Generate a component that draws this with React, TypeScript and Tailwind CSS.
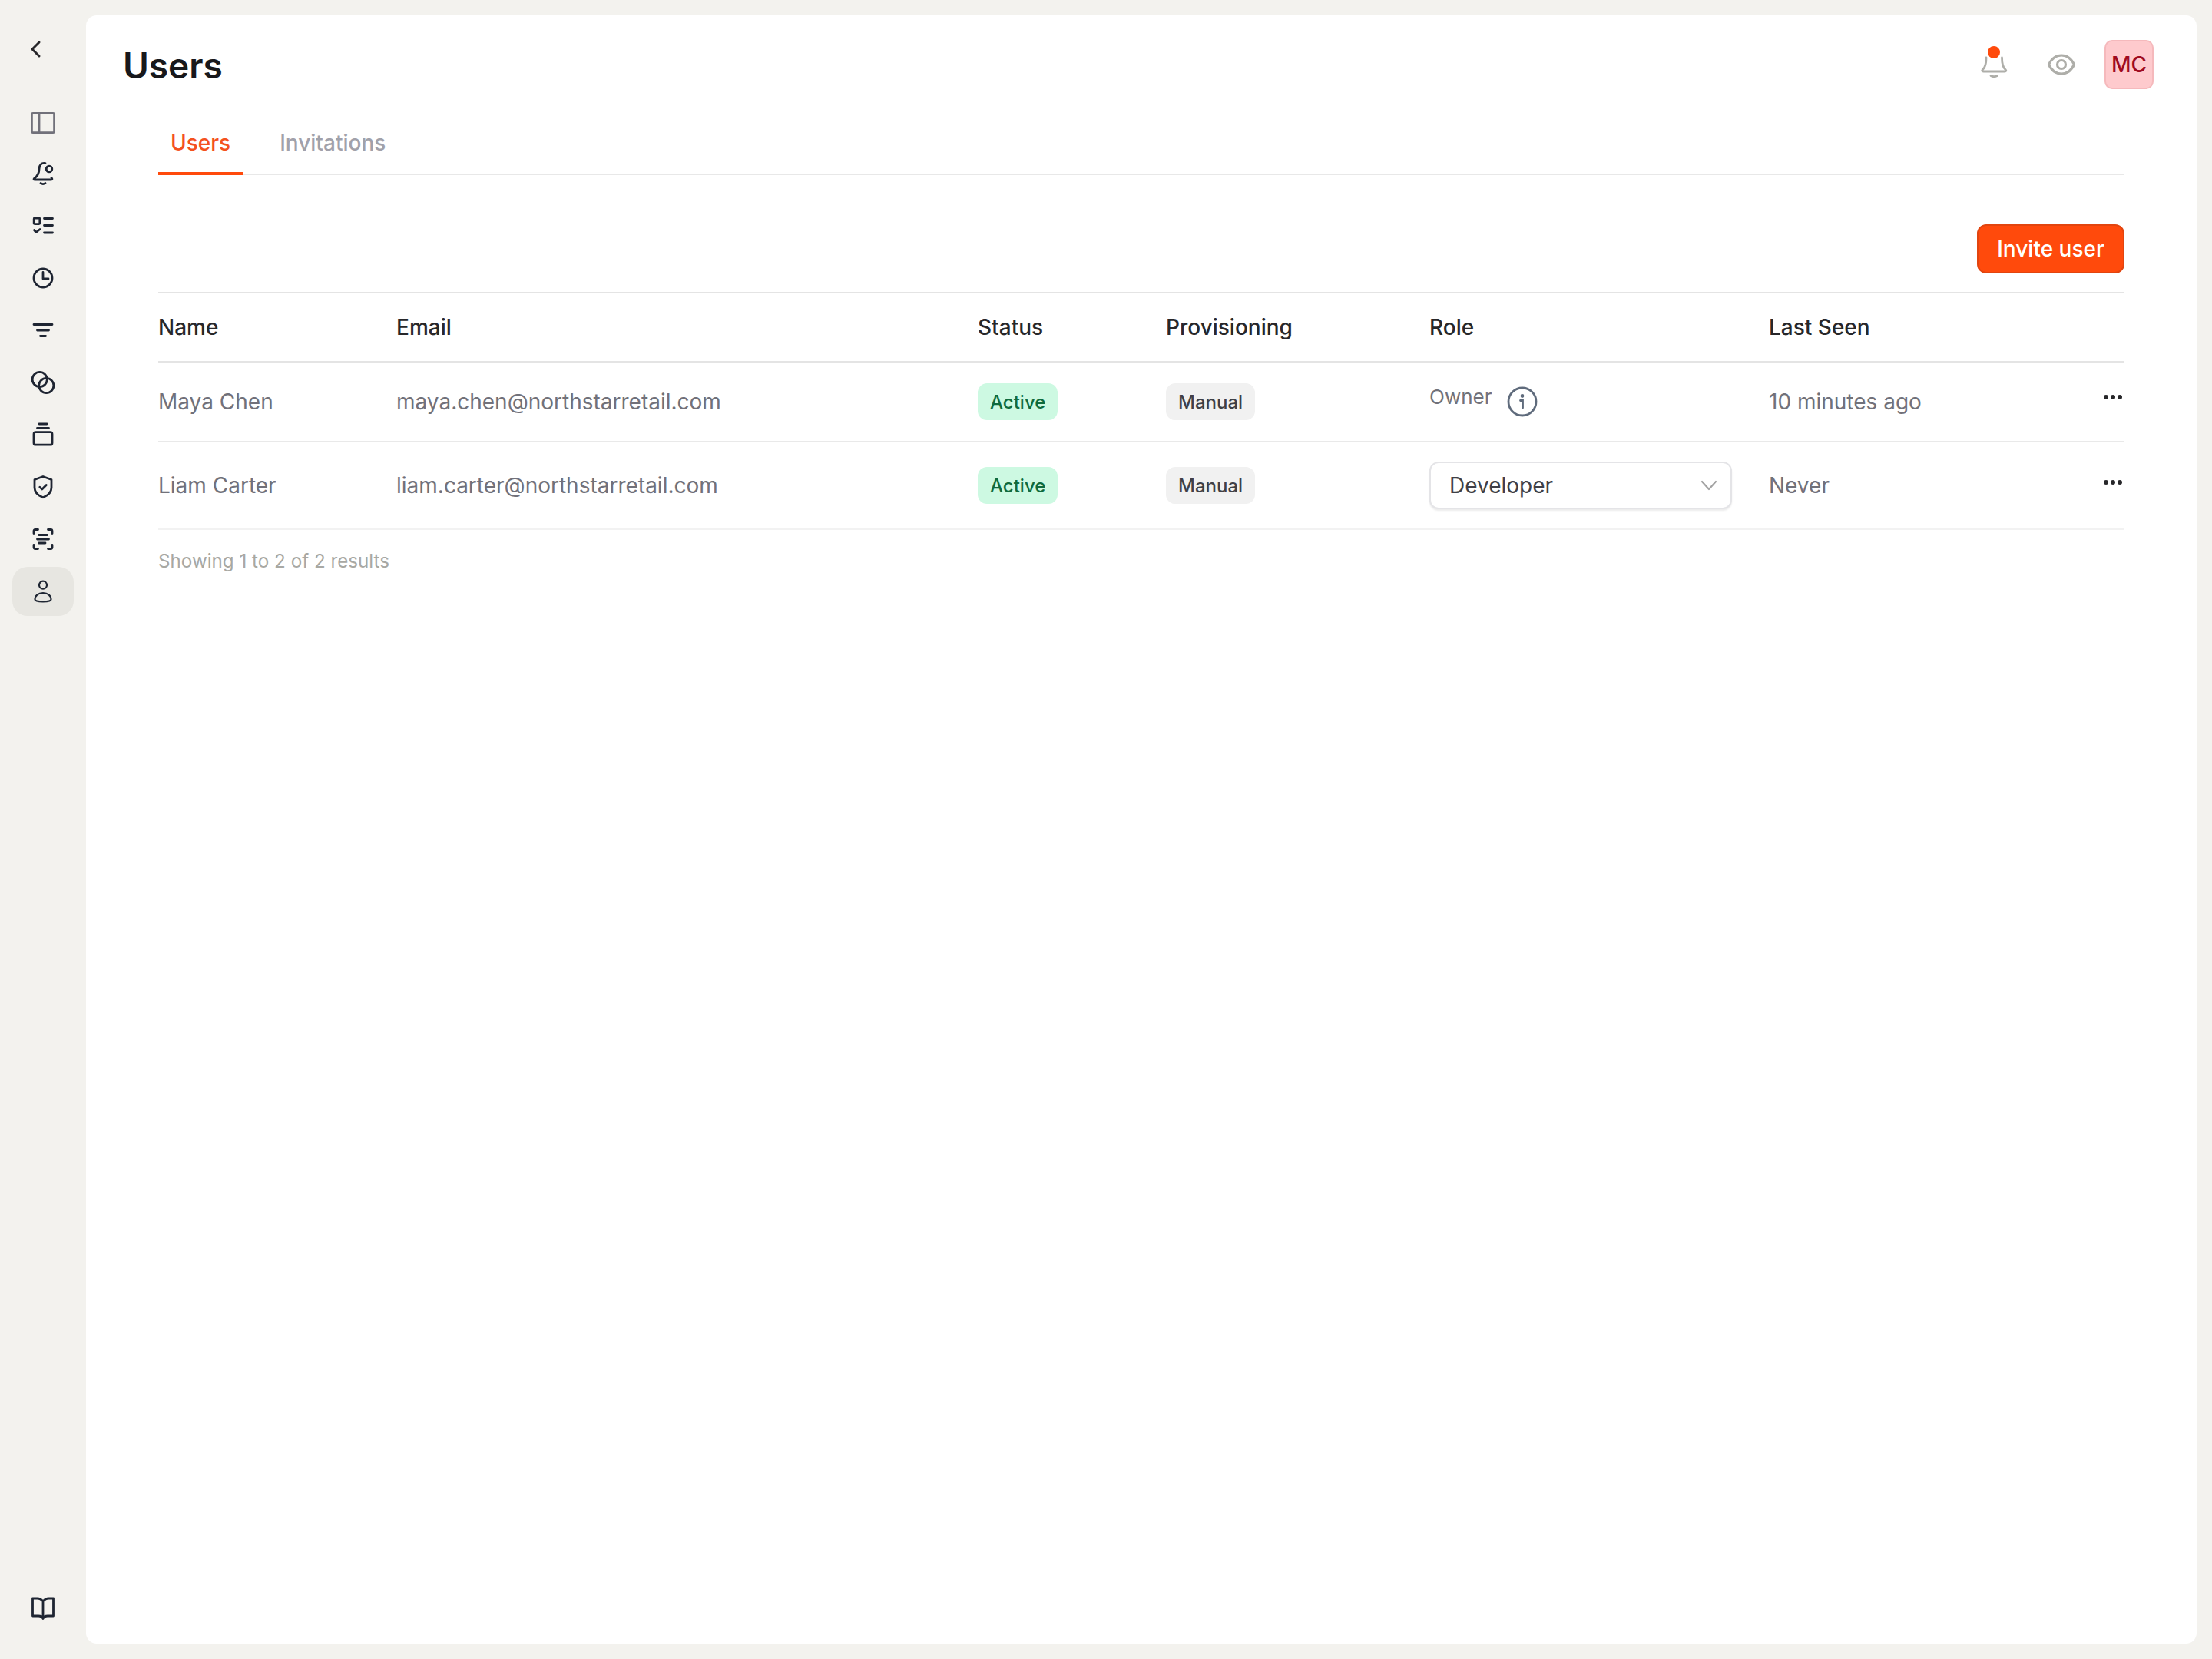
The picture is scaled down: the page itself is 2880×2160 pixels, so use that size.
import type { ReactNode } from "react"

const gridCols = "grid grid-cols-[310px_757px_245px_343px_442px_1fr]"

function NavIcon({ children, gray }: { children: ReactNode; gray?: boolean }) {
  return (
    <svg
      viewBox="0 0 40 40"
      fill="none"
      stroke={gray ? "#71717a" : "#1e2532"}
      strokeWidth={2.8}
      strokeLinecap="round"
      strokeLinejoin="round"
      className="h-[40px] w-[40px]"
    >
      {children}
    </svg>
  )
}

const navItems: { key: string; gray?: boolean; active?: boolean; icon: ReactNode }[] = [
  {
    key: "panel",
    gray: true,
    icon: (
      <>
        <rect x="5.4" y="9.4" width="29.2" height="25.2" rx="1.5" />
        <path d="M15 9.4V34.6" />
      </>
    ),
  },
  {
    key: "alerts",
    icon: (
      <>
        <path d="M23 6.5C18 5.5 15 9 15 14C15 20 12 24 8.5 26.5C7.5 27.5 8 28 9.5 28H30.5C32 28 32.5 27 31 25.5" />
        <circle cx="28" cy="14" r="3.8" />
        <path d="M17 32.5Q20 34.8 23 32.5" />
      </>
    ),
  },
  {
    key: "tasks",
    icon: (
      <>
        <rect x="8.2" y="10" width="7.6" height="7.6" rx="1" />
        <path d="M8.5 25.5L11 28.5L16 24.5" />
        <path d="M21.5 10.5H32.5M21.5 19.5H32.5M21.5 29H32.5" />
      </>
    ),
  },
  {
    key: "history",
    icon: (
      <>
        <circle cx="20" cy="20" r="12" />
        <path d="M20 12.5V21H27" />
      </>
    ),
  },
  {
    key: "filters",
    icon: <path d="M8 12.5H32M12.5 20H27.5M16.5 27.5H23.5" />,
  },
  {
    key: "circles",
    icon: (
      <>
        <circle cx="15.7" cy="16" r="9.6" />
        <circle cx="24.3" cy="24" r="9.6" />
      </>
    ),
  },
  {
    key: "stack",
    icon: (
      <>
        <rect x="8" y="16.7" width="24" height="16.5" rx="2.5" />
        <path d="M15 6H25M12.5 11.3H27.5" />
      </>
    ),
  },
  {
    key: "shield",
    icon: (
      <>
        <path d="M20 6.5L31 10.5V21C31 27.5 25.5 31.5 20 33.8C14.5 31.5 9 27.5 9 21V10.5Z" />
        <path d="M15.8 20.2L18.8 23L24.3 17.4" />
      </>
    ),
  },
  {
    key: "scan",
    icon: (
      <>
        <path d="M8 12.5V9.5Q8 7.5 10 7.5H13.5M26.5 7.5H30Q32 7.5 32 9.5V12.5M32 27.5V30.5Q32 32.5 30 32.5H26.5M13.5 32.5H10Q8 32.5 8 30.5V27.5" />
        <path d="M14.5 14.5H25.5M12.5 20H27.5M14.5 25H23" />
      </>
    ),
  },
  {
    key: "users",
    active: true,
    icon: (
      <g strokeWidth={2.2}>
        <circle cx="20" cy="11.7" r="5" />
        <path d="M9.5 30.5C9.5 25.5 14 22 20 22C26 22 30.5 25.5 30.5 30.5C30.5 32 27 33.3 20 33.3C13 33.3 9.5 32 9.5 30.5Z" />
      </g>
    ),
  },
]

const users = [
  { name: "Maya Chen", email: "maya.chen@northstarretail.com", seen: "10 minutes ago", owner: true, h: "h-[104px]" },
  { name: "Liam Carter", email: "liam.carter@northstarretail.com", seen: "Never", owner: false, h: "h-[114px]" },
]

function Dots({ offset }: { offset: string }) {
  return (
    <div className={`flex justify-end gap-[3px] pr-[3px] ${offset}`}>
      <span className="h-[6px] w-[6px] rounded-full bg-[#27272a]" />
      <span className="h-[6px] w-[6px] rounded-full bg-[#27272a]" />
      <span className="h-[6px] w-[6px] rounded-full bg-[#27272a]" />
    </div>
  )
}

export default function App() {
  return (
    <div className="flex h-[2160px] w-[2880px] bg-[#f3f2ee] py-[20px] pr-[20px] font-['Inter',sans-serif]">
      <aside className="flex w-[112px] shrink-0 flex-col justify-between">
        <div>
          <div className="flex h-[106px] items-start pl-[27px] pt-[24px]">
            <svg viewBox="0 0 40 40" fill="none" stroke="#27272a" strokeWidth={3} strokeLinecap="round" strokeLinejoin="round" className="h-[40px] w-[40px]">
              <path d="M24 11L15 20L24 29" />
            </svg>
          </div>
          <nav className="flex flex-col items-center gap-[4px]">
            {navItems.map((item) => (
              <div
                key={item.key}
                className={`flex h-[64px] w-[80px] items-center justify-center rounded-[20px] ${item.active ? "bg-[#e7e6e1]" : ""}`}
              >
                <NavIcon gray={item.gray}>{item.icon}</NavIcon>
              </div>
            ))}
          </nav>
        </div>
        <div className="flex justify-center pb-[26px]">
          <NavIcon>
            <path d="M20 11C18 8.5 15.5 7 12.5 7H6.5V30H14C17 30 19 31 20 33.5C21 31 23 30 26 30H33.5V7H27.5C24.5 7 22 8.5 20 11V33.5" />
          </NavIcon>
        </div>
      </aside>

      <main className="flex flex-1 flex-col rounded-[14px] bg-white">
        <header className="mt-[32px] flex h-[64px] items-center justify-between pl-[48px] pr-[56px]">
          <h1 className="pt-[1px] text-[46px] font-semibold leading-none text-[#18181b]">Users</h1>
          <div className="flex items-center">
            <div className="relative h-[40px] w-[40px]">
              <svg viewBox="0 0 40 40" fill="none" stroke="#aeaea9" strokeWidth={2.8} strokeLinecap="round" strokeLinejoin="round" className="h-[40px] w-[40px]">
                <path d="M10 11C10 20 8.5 24 5.5 26.5C4 28 4.5 29 6.5 29H34C36 29 36.5 28 35 26.5C32 24 30.5 20 30.5 11" />
                <path d="M16 34.5Q20 37 24.5 34.5" />
              </svg>
              <span className="absolute left-[12px] top-[-4px] h-[16px] w-[16px] rounded-full bg-[#ff4a0c]" />
            </div>
            <svg viewBox="0 0 40 40" fill="none" stroke="#aeaea9" strokeWidth={3.2} strokeLinecap="round" strokeLinejoin="round" className="ml-[48px] h-[40px] w-[40px]">
              <path d="M3.5 20C7 12.5 13 8 20 8C27 8 33 12.5 36.5 20C33 27.5 27 32 20 32C13 32 7 27.5 3.5 20Z" />
              <circle cx="20" cy="20" r="5.5" />
            </svg>
            <div className="ml-[36px] flex h-[64px] w-[64px] items-center justify-center rounded-[10px] border-2 border-[#f5b9bc] bg-[#fecacd] text-[28px] font-medium text-[#9f0a1f]">
              MC
            </div>
          </div>
        </header>

        <div className="mx-[94px] mt-[32px] flex flex-col">
          <div className="flex h-[80px] gap-[32px] border-b-2 border-[#e8e8e8]">
            <div className="-mb-[2px] flex h-[80px] items-center border-b-4 border-[#ff4a0c] px-[16px] text-[28px] font-medium text-[#f4511e]">
              Users
            </div>
            <div className="flex h-[76px] items-center px-[16px] text-[28px] font-medium text-[#a1a1aa]">
              Invitations
            </div>
          </div>

          <div className="mb-[24px] mt-[64px] flex justify-end">
            <button className="h-[64px] w-[192px] rounded-[12px] border-2 border-[#e2450f] bg-[#ff4a0c] text-[28px] font-medium text-white">
              Invite user
            </button>
          </div>

          <div className={`${gridCols} h-[92px] items-center border-b-2 border-t-2 border-[#e4e4e4] text-[28px] font-medium text-[#27272a]`}>
            <div>Name</div>
            <div>Email</div>
            <div>Status</div>
            <div>Provisioning</div>
            <div>Role</div>
            <div>Last Seen</div>
          </div>

          {users.map((user) => (
            <div
              key={user.email}
              className={`${gridCols} ${user.h} items-center border-b-2 ${user.owner ? "border-[#e9e9e9]" : "border-[#f2f2f2]"} text-[28px] text-[#71717a]`}
            >
              <div>{user.name}</div>
              <div>{user.email}</div>
              <div>
                <span className="inline-flex h-[48px] items-center rounded-[12px] bg-[#cdf9e2] px-[16px] pt-[1px] text-[24px] font-medium text-[#0f6b3d]">
                  Active
                </span>
              </div>
              <div>
                <span className="inline-flex h-[48px] items-center rounded-[12px] bg-[#f1f1f1] px-[16px] pt-[1px] text-[24px] font-medium text-[#3f3f46]">
                  Manual
                </span>
              </div>
              <div className="pr-[48px]">
                {user.owner ? (
                  <div className="flex items-center gap-[20px]">
                    <span className="-mt-[14px] text-[26px]">Owner</span>
                    <svg viewBox="0 0 40 40" fill="none" stroke="#5f6b7c" strokeWidth={2.8} strokeLinecap="round" className="h-[40px] w-[40px]">
                      <circle cx="20" cy="20" r="18" />
                      <path d="M17.5 18.5H20.5V28" />
                      <circle cx="20" cy="12.5" r="1" fill="#5f6b7c" />
                    </svg>
                  </div>
                ) : (
                  <div className="flex h-[62px] items-center justify-between rounded-[12px] border-2 border-[#e4e4e7] bg-white pl-[24px] pr-[16px] text-[#3f3f46] shadow-[0_2px_2px_rgba(0,0,0,0.08)]">
                    <span>Developer</span>
                    <svg viewBox="0 0 24 16" fill="none" stroke="#a3a3a3" strokeWidth={2.2} strokeLinecap="round" strokeLinejoin="round" className="h-[16px] w-[24px]">
                      <path d="M3 3L12 13L21 3" />
                    </svg>
                  </div>
                )}
              </div>
              <div className="flex items-center justify-between">
                <span>{user.seen}</span>
                <Dots offset={user.owner ? "-mt-[12px]" : "-mt-[8px]"} />
              </div>
            </div>
          ))}

          <div className="mt-[25px] text-[24.2px] leading-[32px] text-[#a8a8a3]">Showing 1 to 2 of 2 results</div>
        </div>
      </main>
    </div>
  )
}
